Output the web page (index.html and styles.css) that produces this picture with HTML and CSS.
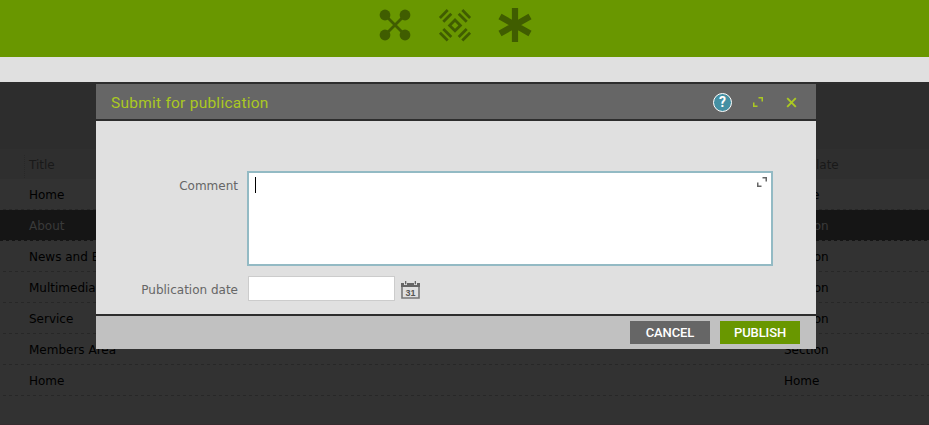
FILE: index.html
```html
<!DOCTYPE html>
<html lang="en">
<head>
<meta charset="utf-8">
<title>Submit for publication</title>
<link rel="stylesheet" href="styles.css">
</head>
<body>
<header class="brand">
  <svg class="brand-icon" width="34" height="34" viewBox="0 0 34 34"><path d="M7 6L27 26M27 6L7 26" stroke-width="2.8"/><g class="solid"><circle cx="7" cy="6" r="5.400"/><circle cx="27" cy="6" r="5.400"/><circle cx="7" cy="26" r="5.400"/><circle cx="27" cy="26" r="5.400"/></g></svg>
  <svg class="brand-icon" width="34" height="34" viewBox="0 0 34 34"><path d="M17 11L22.400 16.400L17 21.800L11.600 16.400Z" stroke-width="2.800"/><path stroke-width="2.800" d="M1.900 8.900L9.700 1.100M5.300 12.700L13.300 4.700M24.300 1.100L32.100 8.900M20.700 4.700L28.700 12.700M1.900 23.700L9.700 31.500M5.300 19.900L13.300 27.900M32.100 23.700L24.300 31.500M28.700 19.900L20.700 27.900"/></svg>
  <svg class="brand-icon" width="34" height="34" viewBox="0 0 34 34"><path d="M17 -1V33M2 7.500L32 24.500M32 7.500L2 24.500" stroke-width="6.200"/></svg>
</header>
<div class="toolbar"></div>
<main class="content">
  <div class="row head"><span class="name">Title</span><span>Template</span></div>
  <div class="row"><span class="name">Home</span><span>Home</span></div>
  <div class="row selected"><span class="name">About</span><span>Section</span></div>
  <div class="row"><span class="name">News and Events</span><span>Section</span></div>
  <div class="row"><span class="name">Multimedia</span><span>Section</span></div>
  <div class="row"><span class="name">Service</span><span>Section</span></div>
  <div class="row"><span class="name">Members Area</span><span>Section</span></div>
  <div class="row"><span class="name">Home</span><span>Home</span></div>
</main>
<section class="dialog">
  <div class="dialog-head">
    <h1>Submit for publication</h1>
    <span class="help">?</span>
    <svg class="expand" width="10" height="10" viewBox="0 0 10 10"><path d="M5.500 .75H9.250V4.500M.75 5.500V9.250H4.500"/></svg>
    <svg class="close" width="11" height="11" viewBox="0 0 11 11"><path d="M1.200 1.200L9.800 9.800M9.800 1.200L1.200 9.800"/></svg>
  </div>
  <div class="dialog-body">
    <div class="field">
      <span class="label">Comment</span>
      <div class="comment"><span class="caret"></span><svg class="grow" width="10" height="10" viewBox="0 0 10 10"><path d="M5.500 .75H9.250V4.500M.75 5.500V9.250H4.500"/></svg></div>
    </div>
    <div class="field date-field">
      <span class="label">Publication date</span>
      <div class="date"></div>
      <svg class="calendar" width="19" height="18" viewBox="0 0 19 18"><path class="frame" d="M1 3V17H18V3"/><path class="bar" d="M0 2H3V4H6V2H13V4H16V2H19V6H0Z"/><path class="bar" d="M4 0H5.300V3.300H4ZM13.700 0H15V3.300H13.700Z"/><text x="9.600" y="14.500">31</text></svg>
    </div>
  </div>
  <div class="dialog-foot"><span class="button">CANCEL</span><span class="button publish">PUBLISH</span></div>
</section>
</body>
</html>
```
FILE: styles.css
```css
* { box-sizing: border-box; }
body { margin: 0; height: 425px; overflow: hidden; position: relative; background: #323232; font: 12px/32px "DejaVu Sans", sans-serif; }
.brand { height: 57px; background: #699700; display: flex; padding: 9px 0 0 378px; gap: 26px; }
.brand-icon { stroke: #405d00; fill: none; display: block; overflow: visible; }
.brand-icon .solid { fill: #405d00; stroke: none; }
.toolbar { height: 25px; background: #e0e0e0; }
.content { height: 343px; padding-top: 67px; background: linear-gradient(#2d2d2d 67px, #323232 67px); border-bottom: 1px solid #352c2f; }
.row { height: 31px; display: flex; padding-left: 29px; color: #000; background: repeating-linear-gradient(90deg, transparent 0 3px, #272727 3px 6px) 0 30px / 100% 1px no-repeat; }
.row .name { width: 755px; }
.row.head { height: 30px; color: #191919; background: repeating-linear-gradient(#282828 0 1px, transparent 1px 2px) 24px 6px / 1px 23px no-repeat #2f2f2f; }
.row.selected { color: #3a3a3a; background: repeating-linear-gradient(90deg, transparent 0 3px, #303030 3px 6px) 0 30px / 100% 1px no-repeat #151515; }
.dialog { position: absolute; left: 96px; top: 82px; width: 720px; background: #e0e0e0; }
.dialog-head { height: 39px; border: solid #2d2d2d; border-width: 2px 0; background: #666; display: flex; align-items: center; padding: 0 19px 0 15px; color: #abc922; }
h1 { flex: 1; margin: 0; padding-top: 3px; font: 400 15.500px/35px Roboto, sans-serif; letter-spacing: .24px; }
.help { width: 19px; height: 19px; border: 1.500px solid #fff; border-radius: 50%; background: #4490a3; color: #fff; font: bold 14px/17px Roboto, sans-serif; text-align: center; margin: 1px 21px 0 0; }
.expand, .close { fill: none; stroke: #abc922; stroke-width: 1.500; }
.expand { margin-right: 23px; }
.close { stroke-width: 1.900; margin-top: 1px; }
.dialog-body { height: 193px; padding: 50px 0 0; }
.field { display: flex; color: #666; }
.label { width: 142px; text-align: right; margin-right: 9px; line-height: 31px; }
.comment { width: 526px; height: 95px; border: 2px solid #93bac4; background: #fff; display: flex; justify-content: space-between; padding: 4px 4px 0 6px; }
.caret { width: 1px; height: 16px; background: #000; }
.grow { fill: none; stroke: #666; stroke-width: 1.500; }
.date-field { margin-top: 10px; align-items: center; height: 25px; }
.date-field .label { padding-top: 3px; }
.date { width: 147px; height: 25px; margin-left: 1px; background: #fff; border: 1px solid #ccc; }
.calendar { margin: 3px 0 0 6px; }
.calendar .frame { fill: none; stroke: #777; stroke-width: 1.600; }
.calendar .bar { fill: #666; }
.calendar text { font: bold 9px "Liberation Sans", sans-serif; fill: #555; text-anchor: middle; }
.dialog-foot { height: 35px; background: #c1c1c1; border-top: 2px solid #2d2d2d; display: flex; justify-content: flex-end; padding: 5px 16px 0; gap: 10px; }
.button { width: 80px; height: 23px; background: #666; color: #fff; font: 500 13px/24px Roboto, sans-serif; letter-spacing: -.1px; text-align: center; }
.publish { background: #699700; }
```
